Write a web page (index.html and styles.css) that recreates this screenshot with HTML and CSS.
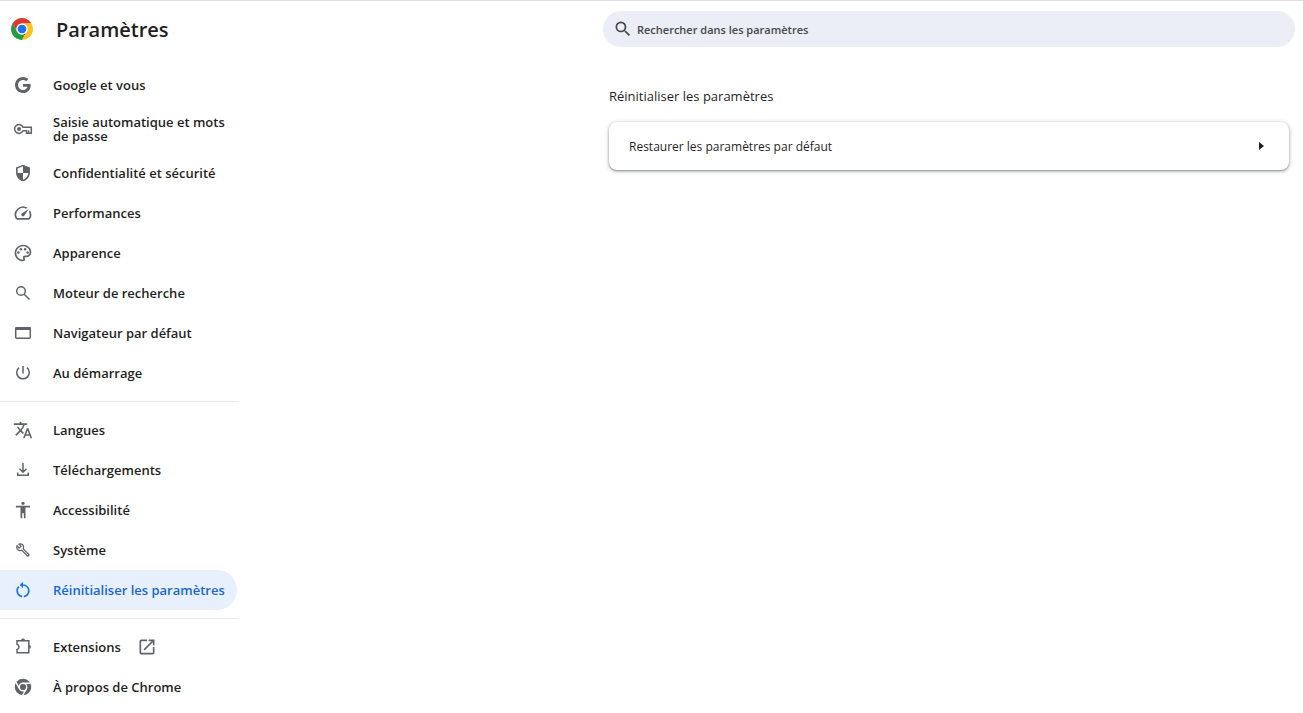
FILE: index.html
```
<!DOCTYPE html>
<html lang="fr">
<head>
    <meta charset="UTF-8">
    <meta name="viewport" content="width=device-width, initial-scale=1.0">
    <title>Paramètres</title>
    <link rel="stylesheet" href="styles.css">
</head>
<body>
    <header class="toolbar">
        <div class="brand">
            <svg class="logo" viewBox="0 0 48 48" aria-hidden="true">
                <path fill="#db3a2e" d="M24 12H44.78A24 24 0 0 0 3.22 12L13.61 30A12 12 0 0 1 24 12z"/>
                <path fill="#249a41" d="M3.22 12A24 24 0 0 0 24 48L34.39 30A12 12 0 0 1 13.61 30z"/>
                <path fill="#fcc31e" d="M44.78 12A24 24 0 0 1 24 48L34.39 30A12 12 0 0 0 24 12z"/>
                <circle cx="24" cy="24" r="12" fill="#fff"/>
                <circle cx="24" cy="24" r="9.5" fill="#1a73e8"/>
            </svg>
            <h1>Paramètres</h1>
        </div>
        <label class="search">
            <svg class="icon" viewBox="0 0 24 24" aria-hidden="true"><path d="M15.5 14h-.79l-.28-.27A6.47 6.47 0 0 0 16 9.5 6.5 6.5 0 1 0 9.5 16c1.61 0 3.09-.59 4.23-1.57l.27.28v.79l5 4.99L20.49 19l-4.99-5zm-6 0C7.01 14 5 11.99 5 9.5S7.01 5 9.5 5 14 7.01 14 9.5 11.99 14 9.5 14z"/></svg>
            <input type="search" placeholder="Rechercher dans les paramètres" aria-label="Rechercher dans les paramètres">
        </label>
    </header>

    <div class="container">
        <nav class="menu">
            <a href="#">
                <svg class="icon" viewBox="-1 -1 20 20"><path d="M16.58 8H9v2.75h4.47c-.24 1.2-1.42 3.27-4.47 3.27-2.72 0-4.93-2.25-4.93-5.02S6.28 3.98 9 3.98c1.54 0 2.57.66 3.17 1.22l2.19-2.12C12.97 1.79 11.16 1 9 1 4.58 1 1 4.58 1 9s3.58 8 8 8c4.62 0 7.68-3.25 7.68-7.82 0-.46-.04-.83-.1-1.18z"/></svg>
                <span>Google et vous</span>
            </a>
            <a href="#" class="two-lines">
                <svg class="icon line" viewBox="0 0 20 20"><path d="M10 8.2A4.4 4.4 0 1 0 10 11.8H13.6V14.2H18.3V8.2z"/><circle class="fill" cx="6" cy="10" r="2"/><path d="M15.6 14V11.4"/></svg>
                <span>Saisie automatique et mots de passe</span>
            </a>
            <a href="#">
                <svg class="icon" viewBox="0 0 24 24"><path d="M12 2L3.6 5.3v5.7c0 5 3.5 9.7 8.4 11 4.9-1.3 8.4-6 8.4-11V5.3zM12 4v8h6.5c-.5 3.8-3 7-6.5 8.1V12H5.5V6.5z"/></svg>
                <span>Confidentialité et sécurité</span>
            </a>
            <a href="#">
                <svg class="icon" viewBox="0 0 24 24"><path d="M20.38 8.57l-1.23 1.85a8 8 0 0 1-.22 7.58H5.07A8 8 0 0 1 15.58 6.85l1.85-1.23A10 10 0 0 0 3.35 19a2 2 0 0 0 1.72 1h13.85a2 2 0 0 0 1.74-1 10 10 0 0 0-.27-10.44zM10.59 15.41a2 2 0 0 0 2.83 0l5.66-8.49-8.49 5.66a2 2 0 0 0 0 2.83z"/></svg>
                <span>Performances</span>
            </a>
            <a href="#">
                <svg class="icon" viewBox="0 0 24 24"><path d="M12 22C6.49 22 2 17.51 2 12S6.49 2 12 2s10 4.04 10 9c0 3.31-2.69 6-6 6h-1.77c-.28 0-.5.22-.5.5 0 .12.05.23.13.33.41.47.64 1.06.64 1.67A2.5 2.5 0 0 1 12 22zm0-18c-4.41 0-8 3.59-8 8s3.59 8 8 8c.28 0 .5-.22.5-.5a.54.54 0 0 0-.14-.35c-.41-.46-.63-1.05-.63-1.65a2.5 2.5 0 0 1 2.5-2.5H16c2.21 0 4-1.79 4-4 0-3.86-3.59-7-8-7z"/><circle cx="6.5" cy="11.5" r="1.5"/><circle cx="9.5" cy="7.5" r="1.5"/><circle cx="14.5" cy="7.5" r="1.5"/><circle cx="17.5" cy="11.5" r="1.5"/></svg>
                <span>Apparence</span>
            </a>
            <a href="#">
                <svg class="icon line" viewBox="0 0 20 20"><circle cx="8" cy="8" r="4.3"/><path d="M11.2 11.2L16.5 16.5"/></svg>
                <span>Moteur de recherche</span>
            </a>
            <a href="#">
                <svg class="icon line" viewBox="0 0 20 20"><rect x="2.7" y="4.7" width="14.6" height="10.6" rx="1"/><path class="thick" d="M2.5 5.5H17.5"/></svg>
                <span>Navigateur par défaut</span>
            </a>
            <a href="#">
                <svg class="icon line" viewBox="0 0 20 20"><path d="M10 3V10.5M6 4.700A6.3 6.3 0 1 0 14 4.7"/></svg>
                <span>Au démarrage</span>
            </a>
            <hr>
            <a href="#">
                <svg class="icon" viewBox="0 0 24 24"><path d="M12.87 15.07l-2.54-2.51.03-.03c1.74-1.94 2.98-4.17 3.71-6.53H17V4h-7V2H8v2H1v1.99h11.17C11.5 7.92 10.44 9.75 9 11.35 8.07 10.32 7.3 9.19 6.69 8h-2c.73 1.63 1.73 3.17 2.98 4.56l-5.09 5.02L4 19l5-5 3.11 3.11.76-2.04zM18.5 10h-2L12 22h2l1.12-3h4.75L21 22h2l-4.5-12zm-2.62 7l1.62-4.33L19.12 17h-3.24z"/></svg>
                <span>Langues</span>
            </a>
            <a href="#">
                <svg class="icon line" viewBox="0 0 20 20"><path d="M10 3V12M6.5 8.7L10 12.2 13.5 8.7M4.7 12.5V15.3H15.3V12.5"/></svg>
                <span>Téléchargements</span>
            </a>
            <a href="#">
                <svg class="icon" viewBox="0 0 24 24"><path d="M12 2c1.1 0 2 .9 2 2s-.9 2-2 2-2-.9-2-2 .9-2 2-2zm8.500 7H15v13h-2v-6h-2v6H9V9H3.5V7h17v2z"/></svg>
                <span>Accessibilité</span>
            </a>
            <a href="#">
                <svg class="icon" viewBox="-4 -4 32 32"><path d="M22.61 18.99l-9.08-9.08c.93-2.34.45-5.1-1.44-7C9.79.61 6.21.4 3.66 2.26L7.5 6.11 6.08 7.52 2.25 3.69C.39 6.23.6 9.82 2.9 12.11c1.86 1.86 4.57 2.35 6.89 1.48l9.11 9.11c.39.39 1.02.39 1.41 0l2.3-2.3c.4-.38.4-1.01 0-1.41zm-3 1.6l-9.46-9.46c-.61.45-1.29.72-2 .82-1.36.2-2.79-.21-3.83-1.25C3.37 9.76 2.93 8.5 3 7.26l3.09 3.09 4.24-4.24-3.09-3.09c1.24-.07 2.49.37 3.44 1.31 1.08 1.08 1.49 2.57 1.24 3.96-.12.71-.42 1.37-.88 1.96l9.45 9.45-.88.89z"/></svg>
                <span>Système</span>
            </a>
            <a href="#" class="selected">
                <svg class="icon" viewBox="0 0 24 24"><path d="M12 5V2L8 6l4 4V7c3.31 0 6 2.69 6 6 0 2.97-2.17 5.43-5 5.91v2.02c3.95-.49 7-3.85 7-7.93 0-4.42-3.58-8-8-8zM6 13c0-1.65.67-3.15 1.76-4.24L6.34 7.34C4.9 8.79 4 10.79 4 13c0 4.08 3.05 7.44 7 7.93v-2.02c-2.83-.48-5-2.94-5-5.91z"/></svg>
                <span>Réinitialiser les paramètres</span>
            </a>
            <hr>
            <a href="#">
                <svg class="icon line" viewBox="0 0 20 20"><path d="M4 3.800H15.8V15.800H4V12.500A2.700 2.700 0 0 0 4 7.300z"/><path class="fill" d="M8 3.500A2 2 0 0 1 12 3.500zM16.200 7.700A2.200 2.200 0 0 1 16.200 12z"/></svg>
                <span>Extensions</span>
                <svg class="icon external" viewBox="0 0 24 24"><path d="M19 19H5V5h7V3H5c-1.11 0-2 .9-2 2v14c0 1.1.89 2 2 2h14c1.1 0 2-.9 2-2v-7h-2v7zM14 3v2h3.59l-9.83 9.83 1.41 1.41L19 6.41V10h2V3h-7z"/></svg>
            </a>
            <a href="#">
                <svg class="icon" viewBox="-5 -5 58 58"><circle cx="24" cy="24" r="24"/><g fill="none" stroke="#fff" stroke-width="4"><circle cx="24" cy="24" r="11"/><path d="M24 13H46M14.5 29.5L3.5 10.4M33.5 29.5L22.5 48.6"/></g></svg>
                <span>À propos de Chrome</span>
            </a>
        </nav>

        <main class="content">
            <section>
                <h2>Réinitialiser les paramètres</h2>
                <button type="button" class="card">
                    <span>Restaurer les paramètres par défaut</span>
                    <span class="arrow"></span>
                </button>
            </section>
        </main>
    </div>
</body>
</html>
```
FILE: styles.css
```
* {
    box-sizing: border-box;
}
body {
    margin: 0;
    border-top: 1px solid #dedede;
    background-color: #fff;
    color: #1f1f1f;
    font-family: "Open Sans", "Noto Sans", sans-serif;
    font-size: 13px;
}
h1, h2 {
    margin: 0;
}

.toolbar {
    height: 56px;
    display: flex;
    align-items: center;
    justify-content: space-between;
    padding: 0 8px 0 11px;
}
.brand {
    display: flex;
    align-items: center;
    gap: 23px;
}
.logo {
    width: 22px;
    height: 22px;
}
h1 {
    padding-top: 2px;
    font-size: 20px;
    font-weight: 600;
    line-height: 32px;
}

.search {
    flex: 0 1 692px;
    height: 36px;
    display: flex;
    align-items: center;
    gap: 4px;
    padding: 0 10px;
    border-radius: 18px;
    background-color: #ebeef7;
    color: #474747;
}
.search input {
    flex: 1;
    min-width: 0;
    padding: 0;
    border: 0;
    outline: 0;
    background: none;
    color: inherit;
    font: 600 11px "Open Sans", "Noto Sans", sans-serif;
}
.search input::placeholder {
    color: #474747;
}

.container {
    display: flex;
    justify-content: space-between;
}

.menu {
    width: 239px;
    flex-shrink: 0;
    padding-top: 8px;
}
.menu a {
    height: 40px;
    display: flex;
    align-items: center;
    gap: 20px;
    margin-right: 2px;
    padding: 0 8px 0 13px;
    border-radius: 0 20px 20px 0;
    color: #1f1f1f;
    font-weight: 600;
    line-height: 14px;
    text-decoration: none;
}
.menu a.two-lines {
    height: 48px;
}
.menu a.selected {
    background-color: #e8f0fe;
    color: #1967d2;
}
.menu hr {
    margin: 8px 0;
    border: 0;
    border-top: 1px solid #e8eaed;
}

.icon {
    width: 20px;
    height: 20px;
    flex-shrink: 0;
    fill: currentColor;
}
.menu .icon {
    color: #5f6368;
}
.menu .selected .icon {
    color: #1a73e8;
}
.menu .external {
    margin-left: -4px;
}
.line {
    fill: none;
    stroke: currentColor;
    stroke-width: 1.5;
}
.line .fill {
    fill: currentColor;
    stroke: none;
}
.line .thick {
    stroke-width: 3;
}

.content {
    flex: 0 1 694px;
    padding: 28px 14px 0 0;
}
h2 {
    margin-bottom: 14px;
    font-size: 13px;
    font-weight: 400;
    line-height: 23px;
}
.card {
    width: 100%;
    height: 48px;
    display: flex;
    align-items: center;
    justify-content: space-between;
    padding: 0 25px 0 20px;
    border: 0;
    border-radius: 8px;
    background-color: #fff;
    box-shadow: 0 1px 2px rgba(60, 64, 67, .5), 0 1px 4px 1px rgba(60, 64, 67, .2);
    color: #1f1f1f;
    font: 12px "Open Sans", "Noto Sans", sans-serif;
}
.arrow {
    border: 4px solid transparent;
    border-left: 5px solid #1f1f1f;
    border-right: 0;
}
```
